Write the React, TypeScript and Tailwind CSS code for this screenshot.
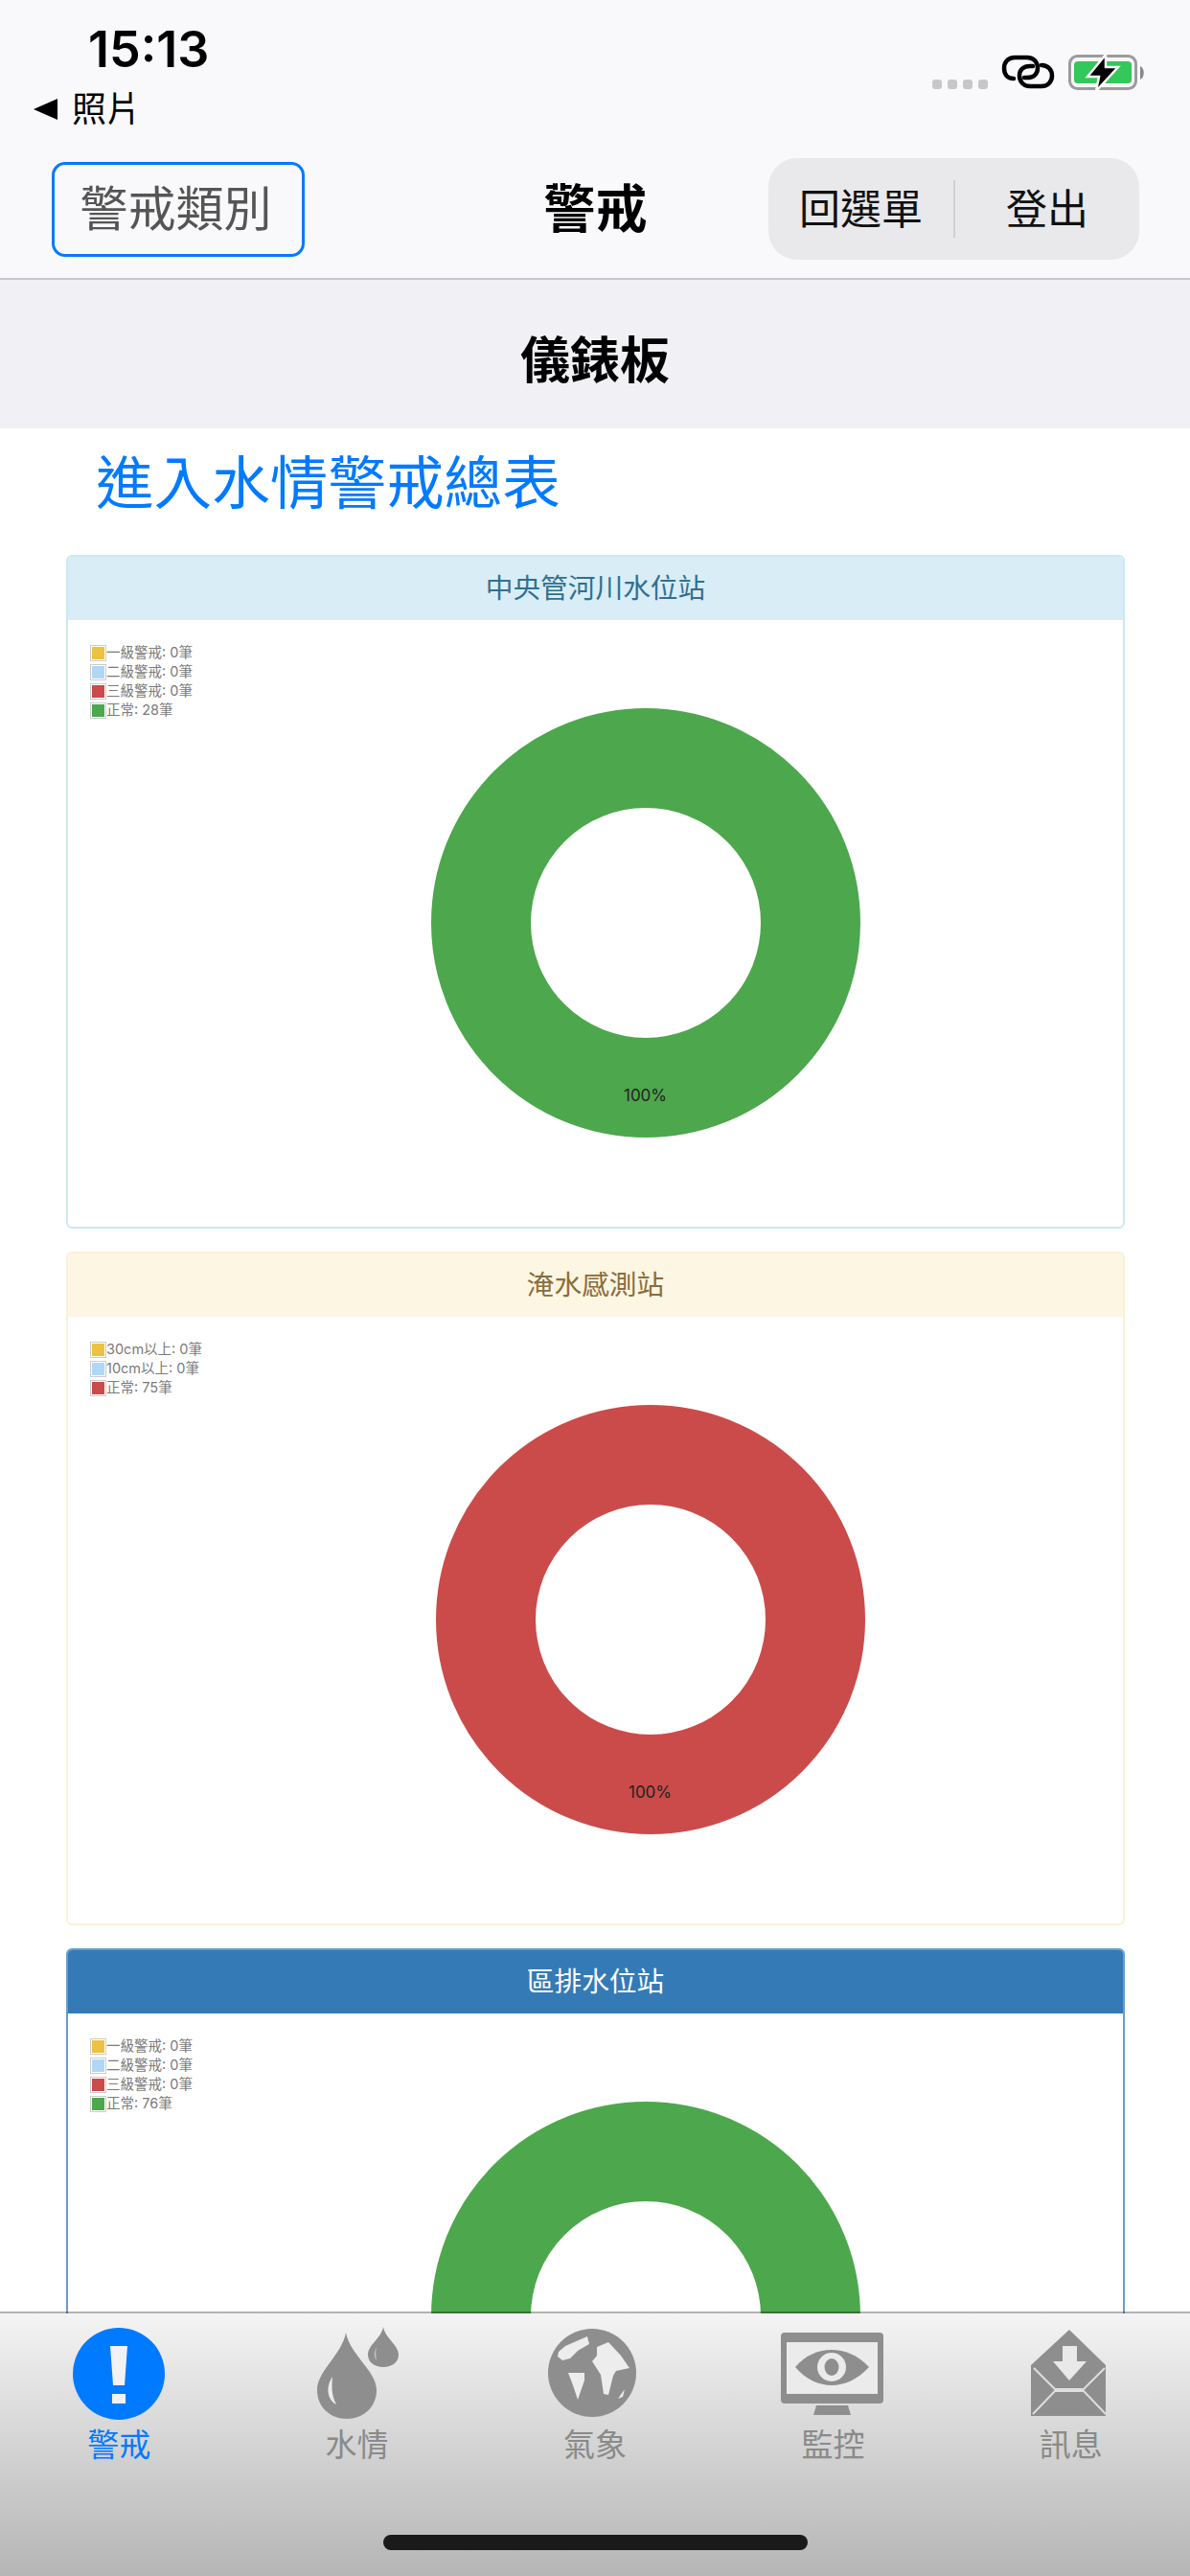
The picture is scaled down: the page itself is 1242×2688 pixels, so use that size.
const GRAY = '#8e8e8e';

const legendRanks = [
  { color: '#edc240', label: '一級警戒: 0筆' },
  { color: '#afd8f8', label: '二級警戒: 0筆' },
  { color: '#cb4b4b', label: '三級警戒: 0筆' },
];

const cards = [
  {
    title: '中央管河川水位站',
    wrap: 'border-[#c9e9f3]',
    head: 'bg-[#d9edf7] text-[#31708f]',
    donutOffset: 'ml-[104px]',
    color: '#4da74d',
    legend: [...legendRanks, { color: '#4da74d', label: '正常: 28筆' }],
  },
  {
    title: '淹水感測站',
    wrap: 'border-[#fbf0d9]',
    head: 'bg-[#fdf6e3] text-[#8a6d3b]',
    donutOffset: 'ml-[114px]',
    color: '#cb4b4b',
    legend: [
      { color: '#edc240', label: '30cm以上: 0筆' },
      { color: '#afd8f8', label: '10cm以上: 0筆' },
      { color: '#cb4b4b', label: '正常: 75筆' },
    ],
  },
  {
    title: '區排水位站',
    wrap: 'border-[#6a9ccb]',
    head: 'bg-[#337ab7] text-white',
    donutOffset: 'ml-[104px]',
    color: '#4da74d',
    legend: [...legendRanks, { color: '#4da74d', label: '正常: 76筆' }],
  },
];

function Donut({ color }: { color: string }) {
  return (
    <div className="relative w-[448px] h-[448px] shrink-0">
      <svg width="448" height="448" viewBox="0 0 448 448">
        <circle cx="224" cy="224" r="172" fill="none" stroke={color} strokeWidth="104" />
      </svg>
      <span className="absolute left-0 right-0 top-[394px] text-center text-[17px] leading-5 text-[#222]">100%</span>
    </div>
  );
}

function Card({ card }: { card: (typeof cards)[number] }) {
  return (
    <section className={`rounded-md border-2 overflow-hidden shrink-0 h-[703px] ${card.wrap}`}>
      <div className={`h-[66px] flex items-center justify-center text-[28.7px] ${card.head}`}>{card.title}</div>
      <div className="relative flex justify-center pt-[92px] bg-white">
        <ul className="absolute left-[23px] top-[24px]">
          {card.legend.map((item) => (
            <li key={item.label} className="flex items-center h-5 text-[14.5px] text-[#7a7a7a]">
              <span className="w-[17px] h-[17px] border border-[#ccc] p-[1px] shrink-0">
                <span className="block w-full h-full" style={{ backgroundColor: item.color }} />
              </span>
              {item.label}
            </li>
          ))}
        </ul>
        <div className={card.donutOffset}>
          <Donut color={card.color} />
        </div>
      </div>
    </section>
  );
}

function AlertIcon() {
  return (
    <svg width="100" height="100" viewBox="0 0 100 100" className="blur-[0.7px]">
      <circle cx="50" cy="50" r="48" fill="#007aff" />
      <path d="M41 21H59L56 62H44Z" fill="#f2f2f2" />
      <rect x="43" y="71" width="14" height="10" fill="#f2f2f2" />
    </svg>
  );
}

function DropIcon() {
  return (
    <svg width="100" height="100" viewBox="0 0 100 100" className="blur-[0.7px]">
      <path d="M38 7C42 30 70 47 70 67C70 85 56 97 39 97C22 97 8 85 8 67C8 47 34 30 38 7Z" fill={GRAY} />
      <path d="M77 1C79 13 93 20 93 30C93 38 86 43 77 43C68 43 61 38 61 30C61 20 75 13 77 1Z" fill={GRAY} />
      <path d="M24 53C17 63 18 77 28 82C23 73 23 63 24 53Z" fill="#ececec" />
      <path d="M70 22C67 27 67 33 70 36C69 31 69 27 70 22Z" fill="#c4c4c4" />
    </svg>
  );
}

function GlobeIcon() {
  return (
    <svg width="100" height="100" viewBox="0 0 100 100" className="blur-[0.7px]">
      <circle cx="47" cy="49" r="46" fill={GRAY} />
      <path d="M12 27L19 21L42 11L44 19L32 26L24 34L16 36L11 32Z" fill="#ededed" />
      <path d="M22 49H39V57L32 77L27 62Z" fill="#ededed" />
      <path d="M52 22L64 17L77 31L86 44L72 47L69 52L64 72L59 71L56 51L47 37L52 31Z" fill="#ededed" />
      <path d="M74 76L81 66L79 74Z" fill="#ededed" />
    </svg>
  );
}

function MonitorIcon() {
  return (
    <svg width="110" height="100" viewBox="0 0 110 100" className="blur-[0.7px] -ml-[3px]">
      <rect x="2" y="7" width="107" height="74" rx="4" fill={GRAY} />
      <rect x="8" y="17" width="95" height="54" fill="#ebebeb" />
      <path d="M39 83H72L75 93H36Z" fill={GRAY} />
      <path d="M17 43C28 30 42 25 55 25C68 25 82 30 94 43C82 56 68 62 55 62C42 62 28 56 17 43Z" fill={GRAY} />
      <ellipse cx="55" cy="43" rx="15" ry="15" fill="#ebebeb" />
      <ellipse cx="55" cy="43" rx="7.5" ry="9" fill={GRAY} />
    </svg>
  );
}

function MailIcon() {
  return (
    <svg width="100" height="100" viewBox="0 0 100 100" className="blur-[0.7px] -ml-[3px]">
      <path d="M50 4L88 41V94H10V41Z" fill={GRAY} />
      <path d="M43 21H58V37H68L50 57L33 37H43Z" fill="#e9e9e9" />
      <path d="M13 44L35 66H65L87 44M12 92L35 68H65L88 92" fill="none" stroke="#dedede" strokeWidth="2" />
    </svg>
  );
}

const tabs = [
  { label: '警戒', icon: AlertIcon, active: true },
  { label: '水情', icon: DropIcon, active: false },
  { label: '氣象', icon: GlobeIcon, active: false },
  { label: '監控', icon: MonitorIcon, active: false },
  { label: '訊息', icon: MailIcon, active: false },
];

export default function App() {
  return (
    <div className="relative w-[1242px] h-[2688px] overflow-hidden bg-white font-['Inter','Noto_Sans_CJK_TC',sans-serif]">
      {/* Status bar + nav */}
      <header className="h-[292px] bg-[#f9f9fb] border-b-2 border-[#c8c8cc]">
        <div className="h-[150px] flex justify-between pr-[47px]">
          <div className="pl-[35px] pt-[22px]">
            <div className="pl-[57px] text-[52px] leading-[60px] font-semibold text-black">15:13</div>
            <div className="flex items-center gap-[14px] mt-[10px] text-[36px] leading-[44px] text-black">
              <svg width="26" height="22" viewBox="0 0 26 22">
                <path d="M0 11L25 0V22Z" fill="#000" />
              </svg>
              照片
            </div>
          </div>
          <div className="flex items-start gap-[14px] pt-[57px]">
            <div className="flex gap-[6px] mt-[26px]">
              <span className="w-[10px] h-[10px] rounded-[3px] bg-[#c7c7c7]" />
              <span className="w-[10px] h-[10px] rounded-[3px] bg-[#c7c7c7]" />
              <span className="w-[10px] h-[10px] rounded-[3px] bg-[#c7c7c7]" />
              <span className="w-[10px] h-[10px] rounded-[3px] bg-[#c7c7c7]" />
            </div>
            <svg width="56" height="36" viewBox="0 0 56 36" fill="none" stroke="#000" strokeWidth="4.5" strokeLinecap="round">
              <path d="M13 25C6 25 3 20 3 14C3 8 7 3 14 3H27C34 3 38 8 38 14C38 20 34 24 27 24H24" />
              <path d="M42 11C49 11 53 16 53 22C53 28 49 33 42 33H30C23 33 19 28 19 22C19 16 23 12 30 12H33" />
            </svg>
            <svg width="80" height="40" viewBox="0 0 80 40">
              <rect x="1.5" y="1.5" width="69" height="34" rx="8" fill="none" stroke="#9b9b9b" strokeWidth="3" />
              <rect x="6" y="7" width="60" height="23" rx="4" fill="#34c759" />
              <path d="M75 12C80 14 80 24 75 26Z" fill="#8a8a8a" />
              <path d="M39 0L20 23H32L29 38L52 13H39Z" fill="#000" stroke="#f9f9fb" strokeWidth="2.5" />
            </svg>
          </div>
        </div>
        <div className="grid grid-cols-[1fr_auto_1fr] items-center pl-[54px] pr-[53px] mt-[15px]">
          <button className="justify-self-start w-[264px] h-[99px] pr-[5px] rounded-[14px] border-[3px] border-[#007aff] text-[50px] text-[#555]">警戒類別</button>
          <h1 className="text-[54px] font-bold text-black">警戒</h1>
          <div className="justify-self-end flex items-center w-[387px] h-[106px] rounded-[30px] bg-[#e9e9eb] text-[43px] text-[#111]">
            <span className="w-[193px] text-center">回選單</span>
            <span className="w-[2px] h-[60px] bg-[#d0d0d2]" />
            <span className="flex-1 text-center">登出</span>
          </div>
        </div>
      </header>

      {/* Section title */}
      <div className="h-[155px] pt-[15px] bg-[#f0f0f5] flex items-center justify-center text-[52px] font-bold text-black">儀錶板</div>

      {/* Content */}
      <main className="bg-white">
        <a className="block pl-[100px] pt-[21px] h-[132px] text-[60.6px] leading-[72px] text-[#007aff]">進入水情警戒總表</a>
        <div className="flex flex-col gap-[24px] ml-[69px] w-[1105px]">
          {cards.map((card) => (
            <Card key={card.title} card={card} />
          ))}
        </div>
      </main>

      {/* Tab bar + home indicator */}
      <nav className="absolute left-0 right-0 bottom-0 h-[276px] border-t-2 border-black/30 bg-clip-padding bg-gradient-to-b from-[#f4f4f4] to-[#b5b5b5]">
        <div className="flex pt-[13px]">
          {tabs.map(({ label, icon: Icon, active }) => (
            <div key={label} className="flex-1 flex flex-col items-center">
              <div className="h-[100px] flex items-center justify-center">
                <Icon />
              </div>
              <span className={`mt-[2px] text-[33px] leading-[44px] ${active ? 'text-[#007aff]' : 'text-[#8a8a8a]'}`}>{label}</span>
            </div>
          ))}
        </div>
        <div className="absolute left-[400px] top-[231px] w-[443px] h-[16px] rounded-full bg-[#1a1a1a]" />
      </nav>
    </div>
  );
}
